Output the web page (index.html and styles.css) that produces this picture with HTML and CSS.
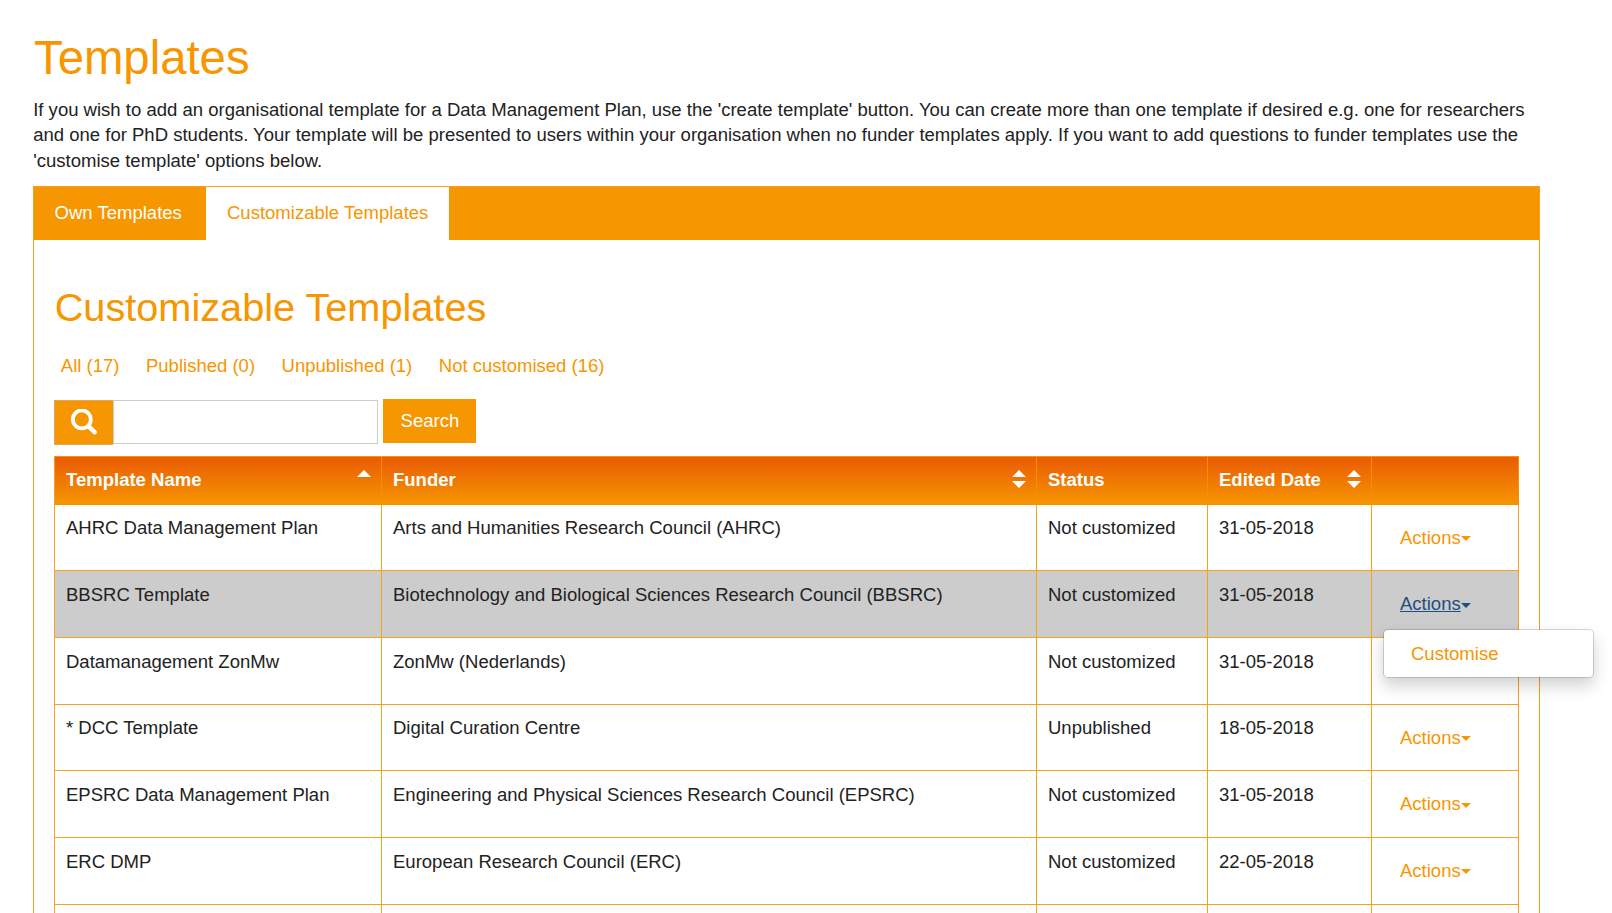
FILE: index.html
```html
<!DOCTYPE html>
<html lang="en">
<head>
<meta charset="utf-8">
<title>Templates</title>
<link rel="stylesheet" href="styles.css">
</head>
<body>
<main class="page">
  <h1 class="title">Templates</h1>
  <p class="intro">If you wish to add an organisational template for a Data Management Plan, use the 'create template' button. You can create more than one template if desired e.g. one for researchers<br>and one for PhD students. Your template will be presented to users within your organisation when no funder templates apply. If you want to add questions to funder templates use the<br>'customise template' options below.</p>
  <section class="panel">
    <nav class="tabs">
      <a class="tab own">Own Templates</a>
      <a class="tab active">Customizable Templates</a>
    </nav>
    <div class="content">
      <h2 class="subtitle">Customizable Templates</h2>
      <ul class="filters">
        <li>All (17)</li>
        <li>Published (0)</li>
        <li>Unpublished (1)</li>
        <li>Not customised (16)</li>
      </ul>
      <form class="search">
        <span class="addon"><svg width="26" height="26" viewBox="0 0 26 26"><circle cx="10.8" cy="10.4" r="9" fill="none" stroke="#fff" stroke-width="3.8"/><path d="M17.5 17.2L23.6 23.2" stroke="#fff" stroke-width="4.6" stroke-linecap="round"/></svg></span>
        <input class="field" type="text" aria-label="Search">
        <button class="button" type="button">Search</button>
      </form>
      <div class="table">
        <div class="row head">
          <div class="cell">Template Name<svg class="sort" width="14" height="18" viewBox="0 0 14 18"><path d="M0 7L7 0L14 7Z"/></svg></div>
          <div class="cell">Funder<svg class="sort" width="14" height="18" viewBox="0 0 14 18"><path d="M0 7L7 0L14 7ZM0 11H14L7 18Z"/></svg></div>
          <div class="cell">Status</div>
          <div class="cell">Edited Date<svg class="sort" width="14" height="18" viewBox="0 0 14 18"><path d="M0 7L7 0L14 7ZM0 11H14L7 18Z"/></svg></div>
          <div class="cell"></div>
        </div>
        <div class="row"><div class="cell">AHRC Data Management Plan</div><div class="cell">Arts and Humanities Research Council (AHRC)</div><div class="cell">Not customized</div><div class="cell">31-05-2018</div><div class="cell act"><a>Actions</a><i class="caret"></i></div></div>
        <div class="row hover"><div class="cell">BBSRC Template</div><div class="cell">Biotechnology and Biological Sciences Research Council (BBSRC)</div><div class="cell">Not customized</div><div class="cell">31-05-2018</div><div class="cell act"><a>Actions</a><i class="caret"></i><div class="menu">Customise</div></div></div>
        <div class="row"><div class="cell">Datamanagement ZonMw</div><div class="cell">ZonMw (Nederlands)</div><div class="cell">Not customized</div><div class="cell">31-05-2018</div><div class="cell"></div></div>
        <div class="row"><div class="cell">* DCC Template</div><div class="cell">Digital Curation Centre</div><div class="cell">Unpublished</div><div class="cell">18-05-2018</div><div class="cell act"><a>Actions</a><i class="caret"></i></div></div>
        <div class="row"><div class="cell">EPSRC Data Management Plan</div><div class="cell">Engineering and Physical Sciences Research Council (EPSRC)</div><div class="cell">Not customized</div><div class="cell">31-05-2018</div><div class="cell act"><a>Actions</a><i class="caret"></i></div></div>
        <div class="row"><div class="cell">ERC DMP</div><div class="cell">European Research Council (ERC)</div><div class="cell">Not customized</div><div class="cell">22-05-2018</div><div class="cell act"><a>Actions</a><i class="caret"></i></div></div>
        <div class="row last"><div class="cell"></div><div class="cell"></div><div class="cell"></div><div class="cell"></div><div class="cell"></div></div>
      </div>
    </div>
  </section>
</main>
</body>
</html>
```
FILE: styles.css
```css
* { box-sizing: border-box; }
body {
  margin: 0;
  background: #fff;
  color: #222;
  font: 18.53px/25.5px "Liberation Sans", Arial, sans-serif;
}
.page { height: 913px; padding: 32px 72px 0 33px; overflow: hidden; }
.title { margin: 0; padding-left: 1px; font-size: 47.3px; line-height: 52px; font-weight: 400; color: #f69600; }
.intro { margin: 12.7px 0 12.3px; height: 77px; padding-left: .2px; white-space: nowrap; }
.panel { width: 1507px; height: 727px; border: 1px solid #f8a01c; border-bottom: 0; }
.tabs { display: flex; height: 53px; background: #f69600; }
.tab { padding-top: 13.3px; color: #fff; white-space: nowrap; }
.own { width: 172.4px; padding-left: 20.6px; }
.active { width: 242.6px; height: 54px; padding-left: 20.6px; background: #fff; color: #f69600; }
.content { padding: 45.5px 20px 0; }
.subtitle { margin: 0; padding-left: .7px; font-size: 39.7px; line-height: 44px; font-weight: 400; color: #f69600; }
.filters { display: flex; gap: 26.5px; margin: 23.5px 0 20.2px; padding: 0 0 0 6.8px; list-style: none; color: #f69600; white-space: nowrap; }
.search { display: flex; align-items: flex-start; height: 57px; }
.addon { display: flex; align-items: center; justify-content: center; width: 59px; height: 45px; margin-top: 1px; background: #f69600; border: 1px solid #dca95a; border-right: 0; }
.field { width: 265px; height: 44px; margin-top: 1px; border: 1px solid #ccc; outline: 0; background: #fff; }
.button { width: 93px; height: 44px; margin-left: 5.4px; padding: 0; border: 0; background: #f69600; color: #fff; font: inherit; }
.table { width: 1465px; border-top: 1px solid #f69600; border-left: 1px solid #f8a01c; }
.row { display: grid; grid-template-columns: 327px 655px 171px 164px 147px; height: 66.67px; }
.cell { position: relative; padding: 10.75px 0 0 11px; border-right: 1px solid #f8a01c; border-bottom: 1px solid #f8a01c; white-space: nowrap; }
.head { height: 48px; color: #fff; font-weight: 700; background: linear-gradient(#ea5b05, #f69600); }
.head .cell { padding-top: 10.1px; border-color: #f69000; }
.last { height: 8px; }
.last .cell { border-bottom: 0; padding-top: 0; }
.sort { position: absolute; right: 10px; top: 13px; fill: #fff; }
.hover { background: #ccc; }
.act { display: flex; align-items: flex-start; padding: 19.9px 0 0 28px; color: #f69600; }
.caret { width: 0; height: 0; margin-top: 11.5px; margin-left: .6px; border: 5px solid transparent; border-top-color: currentColor; border-bottom: 0; }
.hover .act { color: #1d4f80; }
.hover .act a { text-decoration: underline; }
.menu {
  position: absolute;
  left: 11px;
  top: 58px;
  z-index: 2;
  width: 211px;
  height: 49px;
  padding: 11px 0 0 27px;
  background: #fff;
  background-clip: padding-box;
  border: 1px solid rgba(0, 0, 0, .15);
  border-radius: 5px;
  box-shadow: 0 8px 16px rgba(0, 0, 0, .18);
  color: #f69600;
}
```
